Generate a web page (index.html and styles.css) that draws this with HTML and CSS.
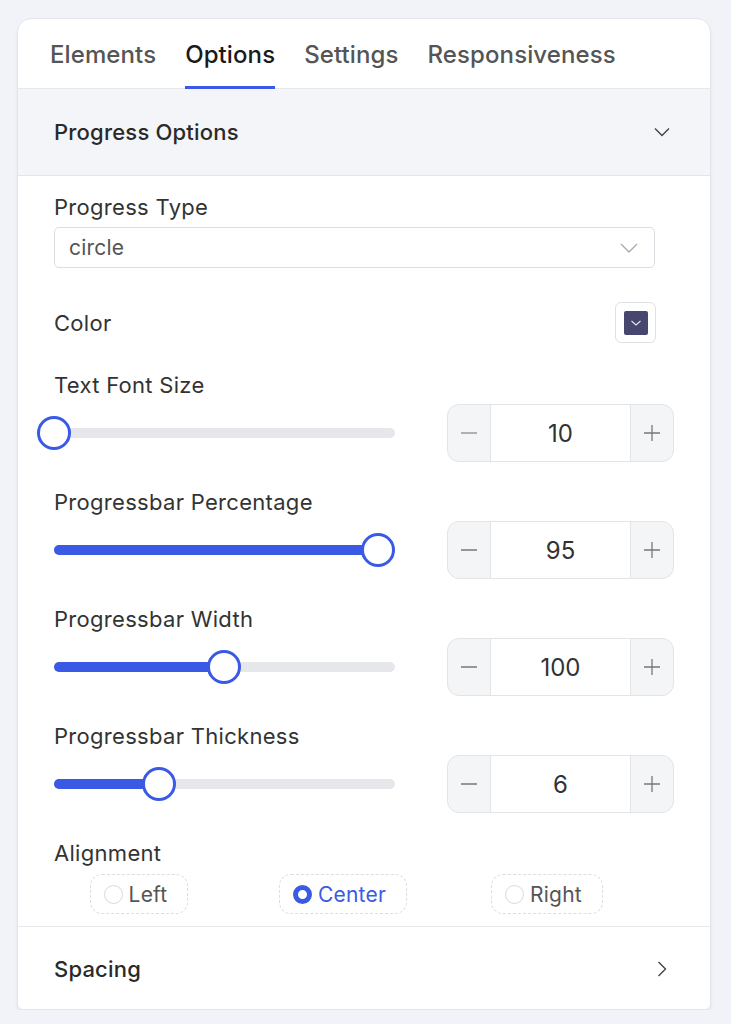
FILE: index.html
```html
<!DOCTYPE html>
<html lang="en">
<head>
  <meta charset="UTF-8" />
  <meta name="viewport" content="width=device-width, initial-scale=1.0" />
  <title>Progress Options</title>
  <link rel="stylesheet" href="styles.css">
</head>
<body>
  <div class="panel">
    <div class="tabs">
      <div class="tab">Elements</div>
      <div class="tab active">Options</div>
      <div class="tab">Settings</div>
      <div class="tab">Responsiveness</div>
    </div>

    <div class="section-head open">
      <span>Progress Options</span>
      <svg class="chev" width="16" height="10" viewBox="0 0 16 10"><path d="M1 1.5 L8 8.5 L15 1.5" fill="none" stroke="#444" stroke-width="1.4"/></svg>
    </div>

    <div class="section-body">
      <label class="field-label">Progress Type</label>
      <div class="select">
        <span>circle</span>
        <svg width="18" height="10" viewBox="0 0 18 10"><path d="M1 1 L9 9 L17 1" fill="none" stroke="#aaa" stroke-width="1.3"/></svg>
      </div>

      <div class="color-row">
        <span class="field-label">Color</span>
        <div class="swatch-box">
          <div class="swatch">
            <svg width="12" height="8" viewBox="0 0 12 8"><path d="M1.5 2 L6 6 L10.5 2" fill="none" stroke="#e6e6f0" stroke-width="1.1"/></svg>
          </div>
        </div>
      </div>

      <div class="slider-field">
        <label class="field-label">Text Font Size</label>
        <div class="slider-row">
          <div class="slider"><div class="fill" style="width: 0px"></div><div class="thumb" style="left: 0px"></div></div>
          <div class="stepper">
            <button class="step"><svg width="16" height="16" viewBox="0 0 16 16"><path d="M0 8 H16" stroke="#999" stroke-width="1.3"/></svg></button>
            <div class="num">10</div>
            <button class="step"><svg width="16" height="16" viewBox="0 0 16 16"><path d="M0 8 H16 M8 0 V16" stroke="#777" stroke-width="1.3"/></svg></button>
          </div>
        </div>
      </div>

      <div class="slider-field">
        <label class="field-label">Progressbar Percentage</label>
        <div class="slider-row">
          <div class="slider"><div class="fill" style="width: 324px"></div><div class="thumb" style="left: 324px"></div></div>
          <div class="stepper">
            <button class="step"><svg width="16" height="16" viewBox="0 0 16 16"><path d="M0 8 H16" stroke="#777" stroke-width="1.3"/></svg></button>
            <div class="num">95</div>
            <button class="step"><svg width="16" height="16" viewBox="0 0 16 16"><path d="M0 8 H16 M8 0 V16" stroke="#777" stroke-width="1.3"/></svg></button>
          </div>
        </div>
      </div>

      <div class="slider-field">
        <label class="field-label">Progressbar Width</label>
        <div class="slider-row">
          <div class="slider"><div class="fill" style="width: 170px"></div><div class="thumb" style="left: 170px"></div></div>
          <div class="stepper">
            <button class="step"><svg width="16" height="16" viewBox="0 0 16 16"><path d="M0 8 H16" stroke="#777" stroke-width="1.3"/></svg></button>
            <div class="num">100</div>
            <button class="step"><svg width="16" height="16" viewBox="0 0 16 16"><path d="M0 8 H16 M8 0 V16" stroke="#777" stroke-width="1.3"/></svg></button>
          </div>
        </div>
      </div>

      <div class="slider-field">
        <label class="field-label">Progressbar Thickness</label>
        <div class="slider-row">
          <div class="slider"><div class="fill" style="width: 105px"></div><div class="thumb" style="left: 105px"></div></div>
          <div class="stepper">
            <button class="step"><svg width="16" height="16" viewBox="0 0 16 16"><path d="M0 8 H16" stroke="#777" stroke-width="1.3"/></svg></button>
            <div class="num">6</div>
            <button class="step"><svg width="16" height="16" viewBox="0 0 16 16"><path d="M0 8 H16 M8 0 V16" stroke="#777" stroke-width="1.3"/></svg></button>
          </div>
        </div>
      </div>

      <label class="field-label align-label">Alignment</label>
      <div class="radios">
        <div class="radio-cell"><div class="radio"><span class="dot"></span>Left</div></div>
        <div class="radio-cell"><div class="radio checked"><span class="dot"></span>Center</div></div>
        <div class="radio-cell"><div class="radio"><span class="dot"></span>Right</div></div>
      </div>
    </div>

    <div class="section-head closed">
      <span>Spacing</span>
      <svg class="chev" width="10" height="16" viewBox="0 0 10 16"><path d="M1.5 1 L8.5 8 L1.5 15" fill="none" stroke="#444" stroke-width="1.4"/></svg>
    </div>
  </div>
</body>
</html>
```

FILE: styles.css
```css
body {
  margin: 0;
  background-color: #f1f3f9;
  font-family: Inter, "Noto Sans", sans-serif;
  color: #333;
}
.panel {
  margin: 18px 0 0 17px;
  width: 694px;
  height: 992px;
  box-sizing: border-box;
  background: white;
  border: 1px solid #e3e5eb;
  border-radius: 14px 14px 6px 6px;
  box-shadow: 0 4px 4px rgba(0, 0, 0, 0.06);
  overflow: hidden;
}
.tabs {
  display: flex;
  gap: 29px;
  height: 70px;
  padding-left: 32px;
  box-sizing: border-box;
  border-bottom: 1px solid #e6e8ee;
  box-shadow: 0 1px 2px rgba(0, 0, 0, 0.05);
}
.tab {
  font-size: 24px;
  font-weight: 500;
  letter-spacing: 0.1px;
  color: #555;
  padding-top: 21px;
  box-sizing: border-box;
  height: 70px;
}
.tab.active {
  color: #1a1a1a;
  border-bottom: 3px solid #3a5ae6;
}
.section-head {
  display: flex;
  align-items: center;
  justify-content: space-between;
  padding: 0 40px 0 36px;
  font-size: 22px;
  font-weight: 500;
  letter-spacing: 0.2px;
  color: #2a2a2a;
}
.section-head.open {
  height: 86px;
  background: #f4f5f9;
  border-bottom: 1px solid #e3e5ea;
}
.section-head.closed {
  height: 84px;
  border-top: 1px solid #e6e8ec;
  padding-right: 43px;
}
.section-body {
  padding: 19px 55px 12px 36px;
}
.field-label {
  display: block;
  font-size: 22px;
  line-height: 24px;
  letter-spacing: 0.3px;
  color: #333;
}
.select {
  margin-top: 8px;
  height: 41px;
  box-sizing: border-box;
  border: 1px solid #dcdde2;
  border-radius: 5px;
  display: flex;
  align-items: center;
  justify-content: space-between;
  padding: 0 16px 0 14px;
  font-size: 21px;
  letter-spacing: 0.2px;
  color: #555;
}
.color-row {
  margin-top: 34px;
  display: flex;
  align-items: center;
  justify-content: space-between;
}
.swatch-box {
  width: 41px;
  height: 41px;
  margin-right: -1px;
  box-sizing: border-box;
  border: 1px solid #e0e1e6;
  border-radius: 6px;
  display: flex;
  align-items: center;
  justify-content: center;
}
.swatch {
  width: 24px;
  height: 24px;
  background: #46466e;
  border-radius: 2px;
  display: flex;
  align-items: center;
  justify-content: center;
}
.slider-field {
  margin-top: 30px;
}
.slider-field + .slider-field {
  margin-top: 28px;
}
.slider-row {
  margin-top: 7px;
  margin-right: -19px;
  display: flex;
  align-items: center;
  justify-content: space-between;
}
.slider {
  position: relative;
  width: 341px;
  height: 10px;
  border-radius: 5px;
  background: #e6e7eb;
}
.fill {
  height: 10px;
  border-radius: 5px;
  background: #3a5ae6;
}
.thumb {
  position: absolute;
  top: -12px;
  width: 34px;
  height: 34px;
  box-sizing: border-box;
  margin-left: -17px;
  border: 3px solid #3a5ae6;
  border-radius: 50%;
  background: white;
}
.stepper {
  display: flex;
  width: 227px;
  height: 58px;
  box-sizing: border-box;
  border: 1px solid #e3e4e8;
  border-radius: 12px;
  overflow: hidden;
  background: #f4f5f7;
}
.step {
  width: 42px;
  border: none;
  background: transparent;
  padding: 0;
  display: flex;
  align-items: center;
  justify-content: center;
}
.num {
  flex: 1;
  background: white;
  border-left: 1px solid #e3e4e8;
  border-right: 1px solid #e3e4e8;
  display: flex;
  align-items: center;
  justify-content: center;
  font-size: 24px;
  color: #333;
}
.align-label {
  margin-top: 28px;
}
.radios {
  margin: 9px 0 0 -17px;
  width: 612px;
  display: grid;
  grid-template-columns: repeat(3, 1fr);
}
.radio-cell {
  display: flex;
  justify-content: center;
}
.radio {
  display: flex;
  align-items: center;
  gap: 6px;
  height: 40px;
  box-sizing: border-box;
  padding: 0 20px 0 13px;
  border: 1px dashed #dcdde1;
  border-radius: 12px;
  font-size: 21px;
  letter-spacing: 0.2px;
  color: #555;
}
.dot {
  width: 19px;
  height: 19px;
  box-sizing: border-box;
  border: 1.5px solid #d8d9dd;
  border-radius: 50%;
}
.radio.checked {
  color: #3a5ae6;
}
.radio.checked .dot {
  border: 5px solid #3a5ae6;
}
```
